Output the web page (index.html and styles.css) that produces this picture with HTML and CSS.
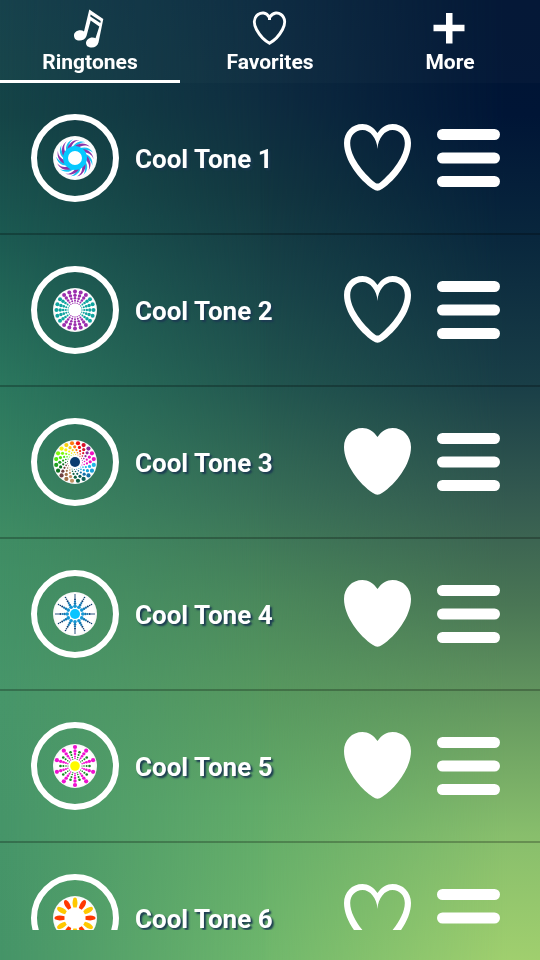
FILE: index.html
```html
<!DOCTYPE html>
<html lang="en">
<head>
  <meta charset="UTF-8">
  <meta name="viewport" content="width=device-width, initial-scale=1">
  <title>Ringtones</title>
  <link rel="stylesheet" href="styles.css">
</head>
<body>
  <svg class="symbols" aria-hidden="true">
    <symbol id="heart-outline" viewBox="0 0 67 67">
      <path fill-rule="evenodd" d="M33.500 9C29.500 3 24 0 18.500 0C8 0 0 8 0 19C0 36 15 56 29 65Q33.500 68.500 38 65C52 56 67 36 67 19C67 8 59 0 48.500 0C43 0 37.500 3 33.500 9ZM33.500 25C33 14 26 6 18.500 6C11.500 6 6.200 11.500 6.200 19C6.200 32 18 48 31.500 59Q33.500 60 35.500 59C49 48 60.800 32 60.800 19C60.800 11.500 55.500 6 48.500 6C41 6 34 14 33.500 25Z"/>
    </symbol>
    <symbol id="heart-full" viewBox="0 0 67 67">
      <path d="M33.500 9C29.500 3 24 0 18.500 0C8 0 0 8 0 19C0 36 15 56 29 65Q33.500 68.500 38 65C52 56 67 36 67 19C67 8 59 0 48.500 0C43 0 37.500 3 33.500 9Z"/>
    </symbol>
    <symbol id="bars" viewBox="0 0 63 58">
      <rect width="63" height="11" rx="5.500"/>
      <rect y="23.500" width="63" height="11" rx="5.500"/>
      <rect y="47" width="63" height="11" rx="5.500"/>
    </symbol>
  </svg>

  <div class="app">
    <nav class="tabs">
      <a class="tab active" href="#ringtones">
        <svg class="tab-icon" viewBox="0 0 40 40" aria-hidden="true">
          <path fill-rule="evenodd" d="M19.300 0.500L33.300 10L28.500 33.500C27.500 37 25 38.500 21.800 38.500C18.500 38.500 16 37 16 34C16 31 19 28.500 22.500 28.500Q24.500 28.500 25.500 29.200L29.300 17.500L20.700 11.500L16.500 27C15.500 30 12.500 31.500 9.500 31.500C6 31.500 4 29.500 4 26.500C4 23.500 7 21.300 10.300 21.300Q12.500 21.300 14 22.500ZM20.600 5.600L20.300 7.400L30.300 14L30.700 12Z"/>
        </svg>
        <span>Ringtones</span>
      </a>
      <a class="tab" href="#favorites">
        <svg class="tab-icon" viewBox="0 0 40 40" aria-hidden="true">
          <path class="line" d="M19.500 8.500C16 2.500 11 3.500 8 5.500C3.500 9 3.500 15 6.500 20.500C10 27 14.500 31.500 19.500 34.200C24.500 31.500 29 27 32.500 20.500C35.500 15 35.500 9 31 5.500C28.500 3.500 23.500 2.500 19.500 8.500V11"/>
        </svg>
        <span>Favorites</span>
      </a>
      <a class="tab" href="#more">
        <svg class="tab-icon" viewBox="0 0 40 40" aria-hidden="true">
          <path d="M16 4H22.500V15.700H34.500V22.300H22.500V34.500H16V22.300H3.500V15.700H16Z"/>
        </svg>
        <span>More</span>
      </a>
    </nav>

    <ul class="tones">
      <li class="tone">
        <button class="play" aria-label="Play Cool Tone 1"><svg class="disc" data-art="swirl" viewBox="-22 -22 44 44"></svg></button>
        <span class="name">Cool Tone 1</span>
        <button class="fav" aria-label="Favorite"><svg><use href="#heart-outline"/></svg></button>
        <button class="menu" aria-label="Options"><svg><use href="#bars"/></svg></button>
      </li>
      <li class="tone">
        <button class="play" aria-label="Play Cool Tone 2"><svg class="disc" data-art="burst" viewBox="-22 -22 44 44"></svg></button>
        <span class="name">Cool Tone 2</span>
        <button class="fav" aria-label="Favorite"><svg><use href="#heart-outline"/></svg></button>
        <button class="menu" aria-label="Options"><svg><use href="#bars"/></svg></button>
      </li>
      <li class="tone">
        <button class="play" aria-label="Play Cool Tone 3"><svg class="disc" data-art="rainbow" viewBox="-22 -22 44 44"></svg></button>
        <span class="name">Cool Tone 3</span>
        <button class="fav" aria-label="Favorite"><svg><use href="#heart-full"/></svg></button>
        <button class="menu" aria-label="Options"><svg><use href="#bars"/></svg></button>
      </li>
      <li class="tone">
        <button class="play" aria-label="Play Cool Tone 4"><svg class="disc" data-art="star" viewBox="-22 -22 44 44"></svg></button>
        <span class="name">Cool Tone 4</span>
        <button class="fav" aria-label="Favorite"><svg><use href="#heart-full"/></svg></button>
        <button class="menu" aria-label="Options"><svg><use href="#bars"/></svg></button>
      </li>
      <li class="tone">
        <button class="play" aria-label="Play Cool Tone 5"><svg class="disc" data-art="flower" viewBox="-22 -22 44 44"></svg></button>
        <span class="name">Cool Tone 5</span>
        <button class="fav" aria-label="Favorite"><svg><use href="#heart-full"/></svg></button>
        <button class="menu" aria-label="Options"><svg><use href="#bars"/></svg></button>
      </li>
      <li class="tone">
        <button class="play" aria-label="Play Cool Tone 6"><svg class="disc" data-art="sun" viewBox="-22 -22 44 44"></svg></button>
        <span class="name">Cool Tone 6</span>
        <button class="fav" aria-label="Favorite"><svg><use href="#heart-outline"/></svg></button>
        <button class="menu" aria-label="Options"><svg><use href="#bars"/></svg></button>
      </li>
    </ul>
  </div>

  <script src="script.js"></script>
</body>
</html>
```
FILE: styles.css
```css
* {
  box-sizing: border-box;
}

body {
  margin: 0;
  font-family: Roboto, "Liberation Sans", sans-serif;
  font-weight: bold;
  color: white;
  background: linear-gradient(#133f49, #154547 12%, #1c5b52 25%, #2b775e 40%, #3f8d64 56%, #47966a 72%, #459468);
}

/* three vertical gradients (left, middle, right) faded into each other */
body::before,
body::after {
  content: "";
  position: fixed;
  inset: 0;
  z-index: -1;
}

body::before {
  background: linear-gradient(#0b2940, #0e2c40 10%, #123640 20%, #194549 30%, #22564f 40%, #386f57 52%, #4a875b 62%, #57985f 72%, #62ab69 84%, #6fb76c);
  mask-image: linear-gradient(to right, transparent, black 50%);
}

body::after {
  background: linear-gradient(#001433, #001536 12%, #09273d 25%, #193e47 40%, #345a50 52%, #4a7655 63%, #669a60 74%, #88be6c 87%, #a0cf6e);
  mask-image: linear-gradient(to right, transparent 48%, black 94%);
}

.symbols {
  display: none;
}

.app {
  display: flex;
  flex-direction: column;
  height: 100vh;
  padding-bottom: 30px;
}

.tabs {
  display: flex;
  flex: none;
  background-color: rgba(255, 255, 255, 0.02);
}

.tab {
  flex: 1;
  display: flex;
  flex-direction: column;
  align-items: center;
  padding-top: 9px;
  border-bottom: 3px solid transparent;
  font-size: 21px;
  line-height: 26px;
  color: white;
  text-decoration: none;
}

.tab.active {
  border-color: white;
}

.tab span {
  padding-bottom: 5px;
}

.tab-icon {
  width: 40px;
  height: 40px;
  fill: white;
}

.tab-icon .line {
  fill: none;
  stroke: white;
  stroke-width: 3;
}

.tones {
  flex: 1;
  min-height: 0;
  margin: 0;
  padding: 0;
  list-style: none;
  overflow-y: auto;
  scrollbar-width: none;
}

.tone {
  display: flex;
  align-items: center;
  height: 152px;
  padding: 0 40px 0 31px;
  border-bottom: 2px solid rgba(0, 0, 0, 0.25);
}

button {
  padding: 0;
  border: none;
  background: none;
  cursor: pointer;
}

button svg {
  display: block;
  width: 100%;
  height: 100%;
  fill: white;
}

.play {
  flex: none;
  width: 88px;
  height: 88px;
  padding: 16px;
  border: 6px solid white;
  border-radius: 50%;
}

.play .disc {
  border-radius: 50%;
  background: radial-gradient(white 60%, #e4e4e4);
}

.name {
  flex: 1;
  padding: 2px 0 0 16px;
  font-size: 26px;
  line-height: 22px;
  text-shadow: 2px 2px 2px #1c3a52;
}

.fav {
  width: 67px;
  height: 67px;
  margin: 0 26px 2px 0;
}

.menu {
  width: 63px;
  height: 58px;
}
```
FILE: script.js
```js
const NS = "http://www.w3.org/2000/svg";

function add(svg, tag, attrs) {
  const el = document.createElementNS(NS, tag);
  for (const key in attrs) el.setAttribute(key, attrs[key]);
  svg.appendChild(el);
}

// rays of dots, each dot is [distance, radius]; angles go clockwise from the top
function rays(svg, count, dots, color, start = 0, twist = 0) {
  for (let i = 0; i < count; i++) {
    dots.forEach(([dist, r], j) => {
      const a = (start + i * 360 / count + j * twist) * Math.PI / 180;
      const fill = typeof color === "function" ? color(i, j) : color;
      add(svg, "circle", { cx: Math.sin(a) * dist, cy: -Math.cos(a) * dist, r, fill });
    });
  }
}

function blades(svg, count, d, colors, start = 0) {
  for (let i = 0; i < count; i++) {
    add(svg, "path", {
      d,
      fill: colors[i % colors.length],
      transform: `rotate(${start + i * 360 / count})`
    });
  }
}

const art = {
  swirl(svg) {
    blades(svg, 9, "M-3 -10C-1 -15 4 -18 10 -16C6 -16 2 -14 1 -10Z", ["#16c4f5"], 2);
    blades(svg, 9, "M-1 -11C3 -15 10 -16 15 -11C10 -14 6 -12 3 -10Z", ["#8c35a8"]);
    add(svg, "circle", { r: 9.5, fill: "none", stroke: "#05c8ff", "stroke-width": 5 });
  },
  burst(svg) {
    const dots = [[18.5, 2], [14.8, 1.7], [11.8, 1.3], [9.2, 1], [7, 0.7]];
    rays(svg, 20, dots, i => Math.floor((i + 2) / 5) % 2 ? "#10a5a0" : "#9b2fae");
  },
  rainbow(svg) {
    const colors = ["#f01010", "#d8102a", "#8b2a9b", "#f010c0", "#f010c0", "#20b8e8", "#18a0d8",
      "#1470a8", "#10605a", "#0c6040", "#c09060", "#a07048", "#704040", "#0c7020", "#20a020",
      "#50e810", "#80f810", "#f8f010", "#f8d010", "#ff7810"];
    rays(svg, 20, [[19, 2.1], [15.2, 1.6], [12, 1.1], [9.5, 0.8], [7.5, 0.5]], i => colors[i], 9, 8);
    add(svg, "circle", { r: 5, fill: "#0c3c70" });
  },
  star(svg) {
    const dots = [[19, 0.8], [17, 0.8], [14.8, 1], [12.6, 1.1], [10.4, 1.3], [7.8, 1.8]];
    rays(svg, 12, dots, (i, j) => j < 3 ? "#0c3c70" : j < 5 ? "#1674ae" : "#1598d5");
    add(svg, "circle", { r: 5, fill: "#08c4ff" });
  },
  flower(svg) {
    rays(svg, 10, [[19, 2.1], [15, 1.7], [12, 1.3], [9.5, 1], [7.5, 0.8]], "#f010d0");
    rays(svg, 10, [[14.5, 1.3], [11.6, 1], [9, 0.8], [7, 0.6]], "#148c20", 18);
    add(svg, "circle", { r: 4.8, fill: "#fffa00" });
  },
  sun(svg) {
    blades(svg, 12, "M-1.7 -10.5Q-3.2 -16 -1.6 -19.5Q0 -21.5 1.6 -19.5Q3.2 -16 1.7 -10.5Z", ["#ffc800", "#ff3800"]);
  }
};

document.querySelectorAll(".disc").forEach(svg => art[svg.dataset.art](svg));

document.querySelectorAll(".fav").forEach(button => {
  button.addEventListener("click", () => {
    const use = button.querySelector("use");
    const full = use.getAttribute("href") === "#heart-full";
    use.setAttribute("href", full ? "#heart-outline" : "#heart-full");
  });
});
```
